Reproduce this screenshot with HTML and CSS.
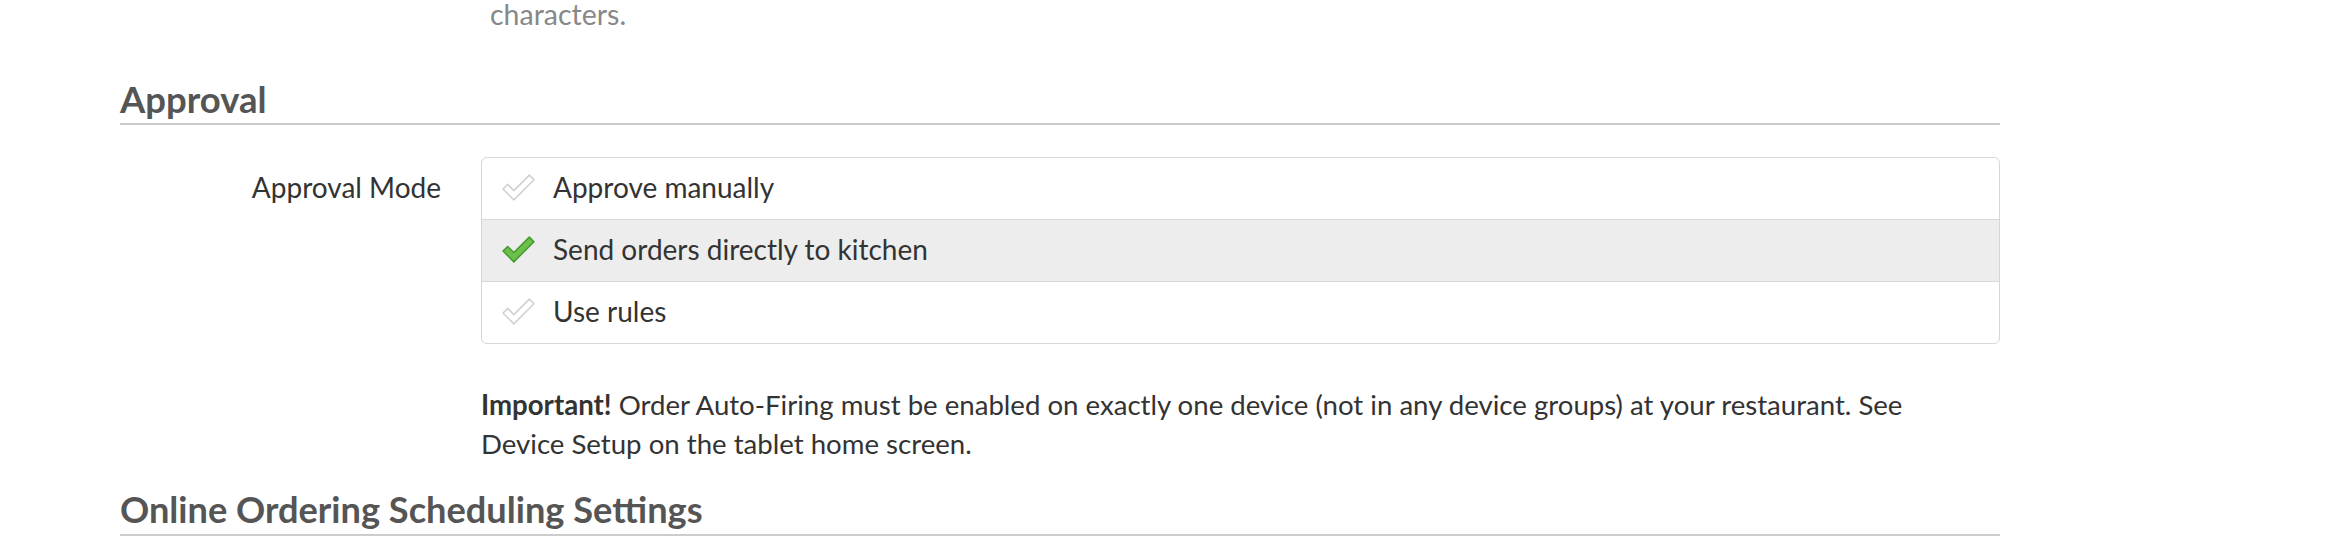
FILE: index.html
```html
<!DOCTYPE html>
<html lang="en">
<head>
<meta charset="utf-8">
<title>Approval settings</title>
<link rel="stylesheet" href="styles.css">
</head>
<body>
<div class="page">
  <p class="help">characters.</p>

  <h2 class="section-title">Approval</h2>

  <div class="form-row">
    <div class="form-label">Approval Mode</div>
    <div class="form-control">
      <ul class="options">
        <li class="option">
          <svg class="check" viewBox="0 0 32 28" aria-hidden="true"><path class="check-off" d="M1 15.5 L5.5 11 L11.5 17 L26.5 2 L31 6.5 L11.5 26 Z"/></svg>
          <span>Approve manually</span>
        </li>
        <li class="option selected">
          <svg class="check" viewBox="0 0 32 28" aria-hidden="true"><path class="check-on" d="M1 15.5 L5.5 11 L11.5 17 L26.5 2 L31 6.5 L11.5 26 Z"/></svg>
          <span>Send orders directly to kitchen</span>
        </li>
        <li class="option">
          <svg class="check" viewBox="0 0 32 28" aria-hidden="true"><path class="check-off" d="M1 15.5 L5.5 11 L11.5 17 L26.5 2 L31 6.5 L11.5 26 Z"/></svg>
          <span>Use rules</span>
        </li>
      </ul>
      <p class="note"><strong>Important!</strong> Order Auto-Firing must be enabled on exactly one device (not in any device groups) at your restaurant. See Device Setup on the tablet home screen.</p>
    </div>
  </div>

  <h2 class="section-title second">Online Ordering Scheduling Settings</h2>
</div>
</body>
</html>
```
FILE: styles.css
```css
html, body {
  margin: 0;
  padding: 0;
  background: #ffffff;
}

body {
  font-family: Lato, "Open Sans", "Liberation Sans", sans-serif;
  color: #333333;
  font-size: 28px;
}

.page {
  width: 1880px;
  padding-left: 120px;
}

.help {
  margin: -5px 0 0 370px;
  font-size: 28.5px;
  line-height: 38px;
  color: #888888;
}

.section-title {
  margin: 46px 0 0 0;
  font-size: 36.5px;
  font-weight: 700;
  line-height: 40px;
  color: #555555;
  padding-bottom: 4px;
  border-bottom: 2px solid #cccccc;
}

.section-title.second {
  margin-top: 26px;
  padding-bottom: 5px;
  font-size: 36.2px;
}

.form-row {
  display: grid;
  grid-template-columns: 321px 1fr;
  column-gap: 40px;
  margin-top: 32px;
}

.form-label {
  align-self: start;
  text-align: right;
  padding-top: 11px;
  line-height: 38px;
  color: #333333;
}

.options {
  list-style: none;
  margin: 0;
  padding: 0;
  border: 1px solid #d6d6d6;
  border-radius: 6px;
  overflow: hidden;
}

.option {
  display: flex;
  align-items: center;
  gap: 18px;
  padding: 10px 20px 13px 20px;
  line-height: 38px;
  color: #333333;
}

.option + .option {
  border-top: 1px solid #d9d9d9;
}

.option.selected {
  background: #ededed;
}

.check {
  width: 33px;
  height: 29px;
  flex: none;
}

.check-off {
  fill: #ffffff;
  stroke: #d0d0d0;
  stroke-width: 1.5;
  stroke-linejoin: round;
}

.check-on {
  fill: #6cc04a;
  stroke: #3f9a2c;
  stroke-width: 1.4;
  stroke-linejoin: round;
}

.note {
  margin: 41px 0 0 0;
  font-size: 27.6px;
  line-height: 39px;
  color: #333333;
  max-width: 1470px;
}

.note strong {
  font-weight: 700;
}
```
